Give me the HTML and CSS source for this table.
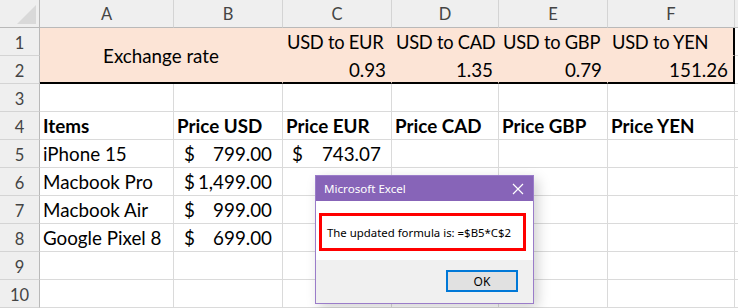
FILE: index.html
```html
<!DOCTYPE html>
<html>
<head>
<meta charset="utf-8">
<link rel="stylesheet" href="styles.css">
</head>
<body>
<div class="sheet">
  <div class="corner"><span class="tri"></span></div>
  <div class="ch">A</div><div class="ch">B</div><div class="ch">C</div><div class="ch">D</div><div class="ch">E</div><div class="ch">F</div><div class="ch"></div>

  <div class="rh">1</div>
  <div class="cell fill merged">Exchange rate</div>
  <div class="cell fill hdr">USD to EUR</div>
  <div class="cell fill hdr">USD to CAD</div>
  <div class="cell fill hdr">USD to GBP</div>
  <div class="cell fill hdr last">USD to YEN</div>
  <div class="cell"></div>

  <div class="rh">2</div>
  <div class="cell fill bottom num">0.93</div>
  <div class="cell fill bottom num">1.35</div>
  <div class="cell fill bottom num">0.79</div>
  <div class="cell fill bottom last num">151.26</div>
  <div class="cell"></div>

  <div class="rh">3</div>
  <div class="cell"></div><div class="cell"></div><div class="cell"></div><div class="cell"></div><div class="cell"></div><div class="cell"></div><div class="cell"></div>

  <div class="rh">4</div>
  <div class="cell bold">Items</div>
  <div class="cell bold">Price USD</div>
  <div class="cell bold">Price EUR</div>
  <div class="cell bold">Price CAD</div>
  <div class="cell bold">Price GBP</div>
  <div class="cell bold">Price YEN</div>
  <div class="cell"></div>

  <div class="rh">5</div>
  <div class="cell">iPhone 15</div>
  <div class="cell acct"><span>$</span><span>799.00</span></div>
  <div class="cell eur"><span>$</span><span>743.07</span></div>
  <div class="cell"></div><div class="cell"></div><div class="cell"></div><div class="cell"></div>

  <div class="rh">6</div>
  <div class="cell">Macbook Pro</div>
  <div class="cell acct"><span>$</span><span>1,499.00</span></div>
  <div class="cell"></div><div class="cell"></div><div class="cell"></div><div class="cell"></div><div class="cell"></div>

  <div class="rh">7</div>
  <div class="cell">Macbook Air</div>
  <div class="cell acct"><span>$</span><span>999.00</span></div>
  <div class="cell"></div><div class="cell"></div><div class="cell"></div><div class="cell"></div><div class="cell"></div>

  <div class="rh">8</div>
  <div class="cell">Google Pixel 8</div>
  <div class="cell acct"><span>$</span><span>699.00</span></div>
  <div class="cell"></div><div class="cell"></div><div class="cell"></div><div class="cell"></div><div class="cell"></div>

  <div class="rh">9</div>
  <div class="cell"></div><div class="cell"></div><div class="cell"></div><div class="cell"></div><div class="cell"></div><div class="cell"></div><div class="cell"></div>

  <div class="rh">10</div>
  <div class="cell"></div><div class="cell"></div><div class="cell"></div><div class="cell"></div><div class="cell"></div><div class="cell"></div><div class="cell"></div>

  <div class="dialog">
    <div class="title">
      <span>Microsoft Excel</span>
      <svg class="close" width="12" height="12" viewBox="0 0 12 12"><path d="M1 1L11 11M11 1L1 11" stroke="#fff" stroke-width="1.2" fill="none"/></svg>
    </div>
    <div class="body">
      <div class="msg">The updated formula is: =$B5*C$2</div>
    </div>
    <div class="foot">
      <div class="ok">OK</div>
    </div>
  </div>
</div>
</body>
</html>
```

FILE: styles.css
```css
html, body {
  margin: 0;
  padding: 0;
  background: #fff;
  overflow: hidden;
}
.sheet {
  position: relative;
  width: 738px;
  height: 308px;
  display: grid;
  grid-template-columns: 40px 134px 109px 109px 107px 109px 127px 1fr;
  grid-template-rows: repeat(11, 28px);
  font-family: Lato, "Liberation Sans", sans-serif;
  font-size: 18.8px;
  color: #000;
}
.corner {
  background: #efefef;
  border-right: 1px solid #b9b9b9;
  border-bottom: 1px solid #b9b9b9;
  position: relative;
}
.tri {
  position: absolute;
  left: 17px;
  top: 5px;
  width: 0;
  height: 0;
  border-left: 19px solid transparent;
  border-bottom: 19px solid #d9d9d9;
}
.ch {
  background: #efefef;
  border-right: 1px solid #d4d4d4;
  border-bottom: 1px solid #b9b9b9;
  color: #444;
  font-size: 16.5px;
  display: flex;
  align-items: center;
  justify-content: center;
  padding-top: 1px;
  box-sizing: border-box;
}
.rh {
  background: #efefef;
  border-right: 1px solid #b9b9b9;
  border-bottom: 1px solid #d4d4d4;
  color: #444;
  font-size: 16.5px;
  display: flex;
  align-items: center;
  justify-content: center;
  padding-top: 2px;
  box-sizing: border-box;
}
.cell {
  border-right: 1px solid #dadada;
  border-bottom: 1px solid #dadada;
  box-sizing: border-box;
  display: flex;
  align-items: flex-end;
  padding: 0 3px 1px 3px;
  white-space: nowrap;
  overflow: hidden;
  line-height: 1.2;
}
.fill {
  background: #fce4d6;
  border-right-color: #fce4d6;
  border-bottom-color: #fce4d6;
  padding-left: 4px;
}
.hdr {
  font-size: 18.3px;
  letter-spacing: -0.25px;
}
.merged {
  grid-row: span 2;
  grid-column: span 2;
  align-items: center;
  justify-content: center;
  border-bottom: 2px solid #000;
  padding: 2px 0 0 0;
}
.bottom {
  border-bottom: 2px solid #000;
  padding-bottom: 0;
}
.last {
  border-right: 2px solid #000;
}
.num {
  justify-content: flex-end;
  padding-right: 5px;
}
.bold {
  font-weight: 700;
}
.acct {
  justify-content: space-between;
  padding-left: 10px;
  padding-right: 10px;
}
.eur {
  justify-content: flex-start;
  gap: 19px;
  padding-left: 9px;
}
.dialog {
  position: absolute;
  left: 315px;
  top: 175px;
  width: 219px;
  height: 129px;
  box-sizing: border-box;
  border: 1px solid #9a7cc9;
  background: #f0f0f0;
  display: flex;
  flex-direction: column;
  font-family: "Noto Sans", "Open Sans", sans-serif;
  font-size: 11.4px;
  box-shadow: 4px 4px 12px rgba(0,0,0,0.18);
}
.title {
  height: 25px;
  background: #8764b8;
  color: #fff;
  display: flex;
  align-items: center;
  justify-content: space-between;
  padding: 0 9px 0 8px;
  font-size: 11.6px;
}
.close {
  display: block;
}
.body {
  background: #fff;
  height: 59px;
  box-sizing: border-box;
  padding: 12px 0 0 3px;
}
.msg {
  width: 207px;
  height: 38px;
  box-sizing: border-box;
  border: 3px solid #ff0000;
  display: flex;
  align-items: center;
  padding: 1px 0 0 5px;
  color: #000;
  white-space: nowrap;
}
.foot {
  flex: 1;
  display: flex;
  justify-content: flex-end;
  align-items: flex-start;
  padding: 10px 15px 0 0;
}
.ok {
  width: 72px;
  height: 22px;
  box-sizing: border-box;
  border: 2px solid #0078d7;
  background: #e1e1e1;
  display: flex;
  align-items: center;
  justify-content: center;
  color: #000;
  font-size: 12px;
}
```
